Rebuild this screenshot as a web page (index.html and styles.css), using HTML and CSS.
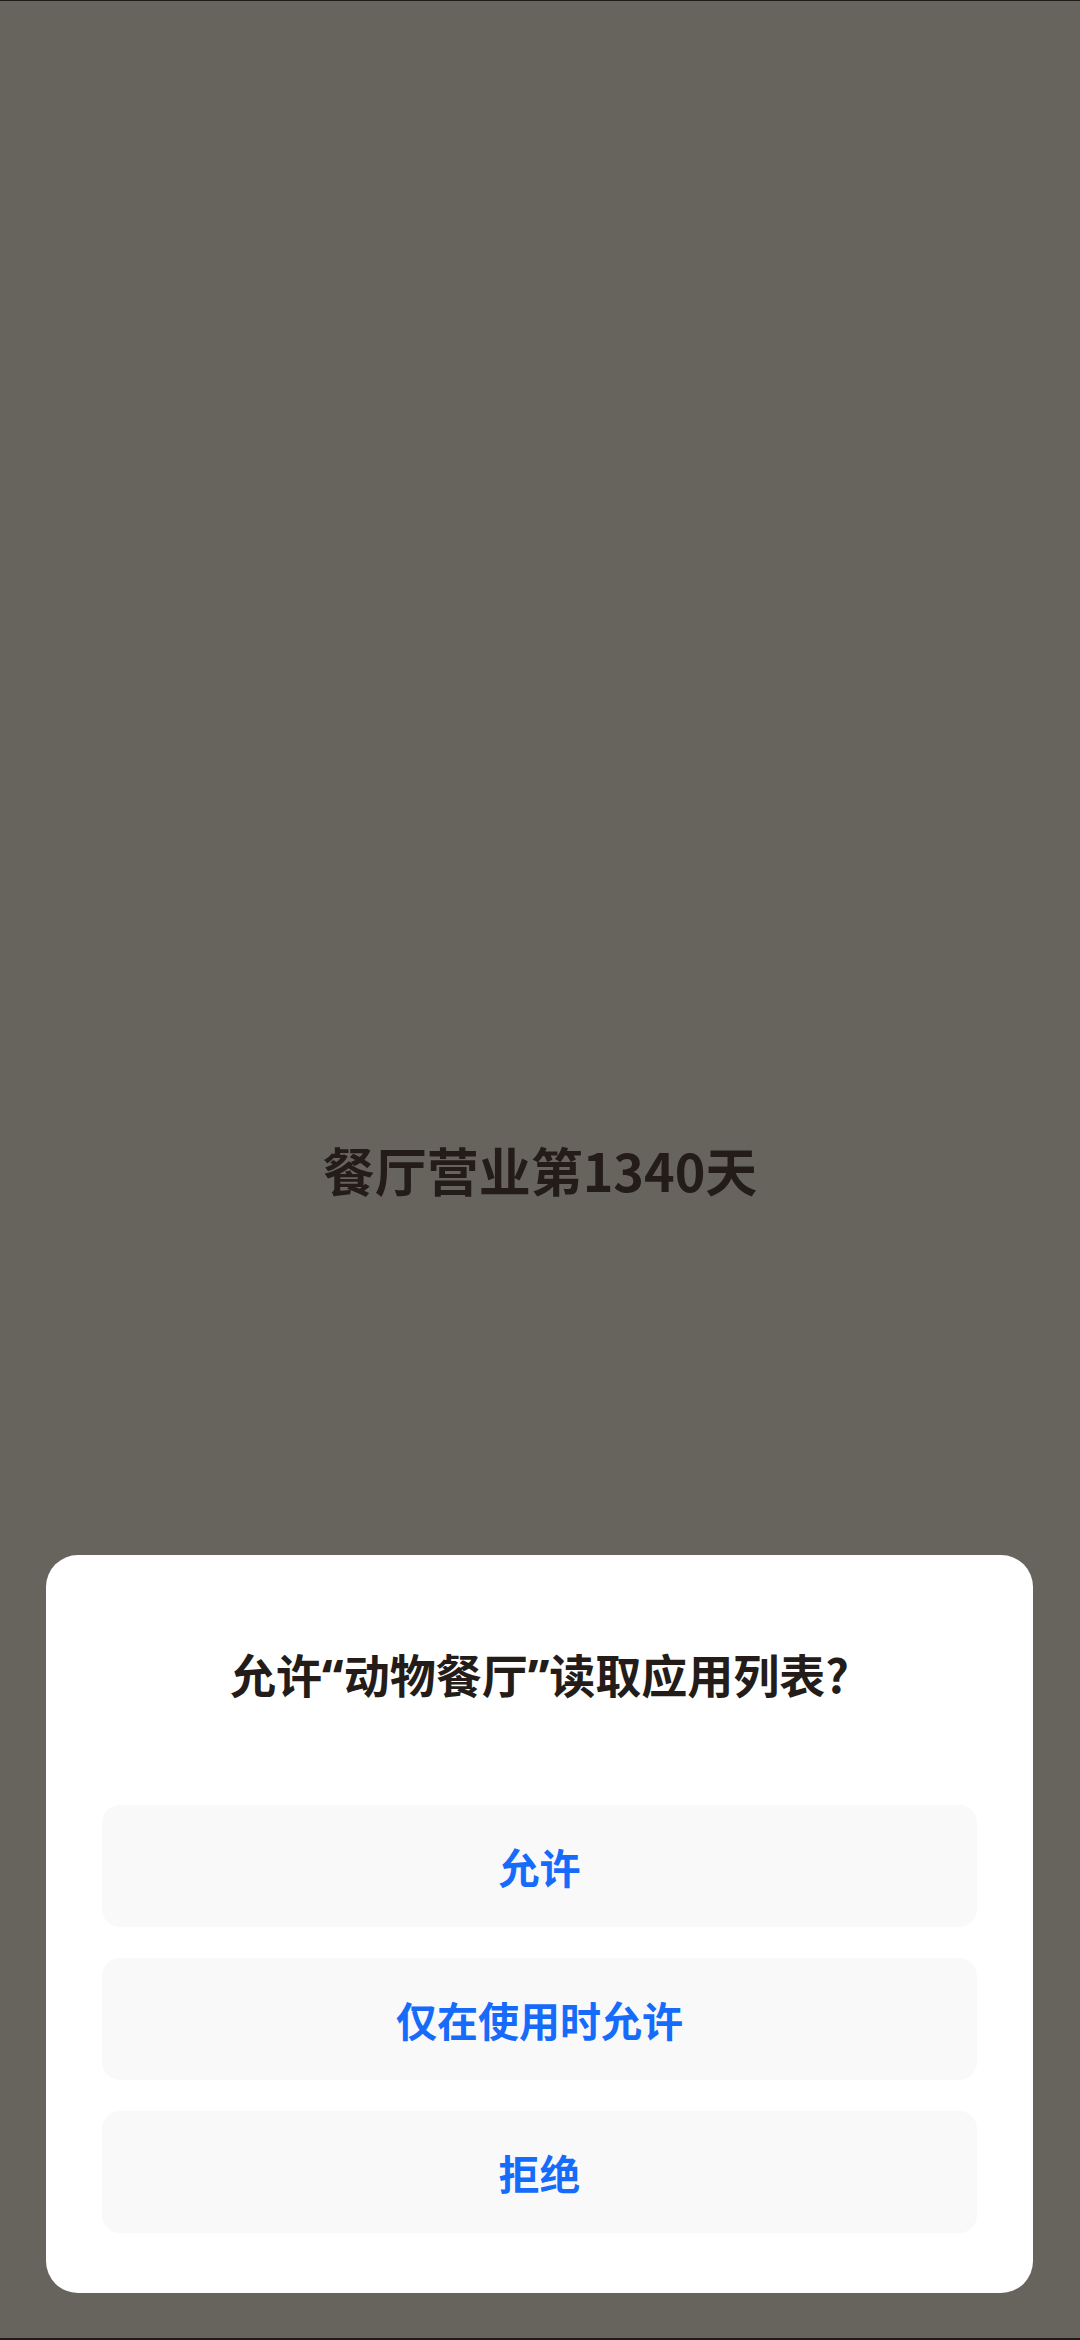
FILE: index.html
```html
<!DOCTYPE html>
<html lang="zh-CN">
<head>
<meta charset="utf-8">
<link rel="stylesheet" href="styles.css">
</head>
<body>
<div class="screen">
  <div class="stage">
    <div class="headline">餐厅营业第1340天</div>
  </div>
  <div class="dialog">
    <div class="title">允许<span class="q">“</span>动物餐厅<span class="q">”</span>读取应用列表?</div>
    <div class="actions">
      <div class="btn">允许</div>
      <div class="btn">仅在使用时允许</div>
      <div class="btn">拒绝</div>
    </div>
  </div>
</div>
</body>
</html>
```
FILE: styles.css
```css
html, body {
  margin: 0;
  padding: 0;
  background: #67645e;
}
.screen {
  width: 1080px;
  height: 2340px;
  box-sizing: border-box;
  border-top: 1px solid #1e1c18;
  border-bottom: 2px solid #1e1c18;
  background: #67645e;
  display: grid;
  grid-template-columns: 1fr;
  grid-template-rows: 1fr;
  font-family: "Noto Sans CJK SC", "Noto Sans", sans-serif;
}
.stage {
  grid-area: 1 / 1;
  align-self: center;
  justify-self: center;
}
.headline {
  font-size: 52px;
  font-weight: 700;
  color: #231c19;
  line-height: 70px;
  text-align: center;
}
.dialog {
  grid-area: 1 / 1;
  align-self: end;
  margin: 0 47px 45px 46px;
  background: #ffffff;
  border-radius: 32px;
  padding: 89px 56px 60px;
  display: flex;
  flex-direction: column;
}
.title {
  font-size: 46px;
  font-weight: 700;
  color: #231c19;
  line-height: 58px;
  text-align: center;
  margin-bottom: 101px;
}
.q {
  font-family: "Noto Sans", "DejaVu Sans", sans-serif;
  font-weight: 800;
}
.actions {
  display: flex;
  flex-direction: column;
  gap: 31px;
}
.btn {
  height: 122px;
  border-radius: 18px;
  background: #f9f9f9;
  color: #176bfb;
  font-size: 41px;
  font-weight: 700;
  display: flex;
  align-items: center;
  justify-content: center;
}
```
